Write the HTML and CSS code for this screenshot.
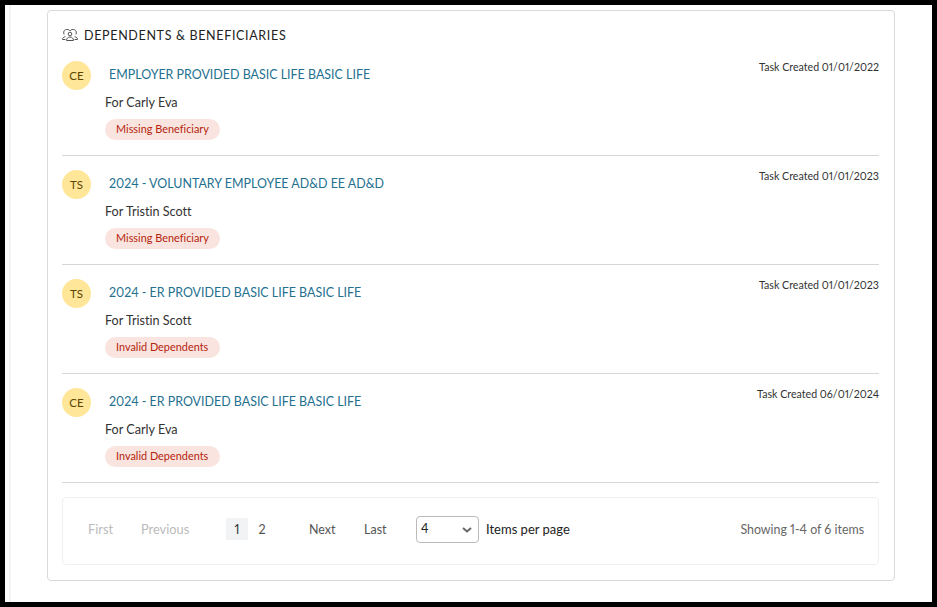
FILE: index.html
```html
<!DOCTYPE html>
<html lang="en">
<head>
<meta charset="utf-8">
<title>Dependents &amp; Beneficiaries</title>
<link rel="stylesheet" href="styles.css">
</head>
<body>
<main class="frame">
  <section class="card">
    <h2 class="card-title">
      <svg class="title-icon" viewBox="0 0 16 12" width="16" height="12" fill="none" stroke="#555" stroke-width="1">
        <path d="M2 5.500C1 1.500 3 .5 5 .5c1.500 0 2.500.5 3 1.500.5-1 1.500-1.500 3-1.500 2 0 4 1 3 5"/>
        <circle cx="8" cy="5" r="1.800"/>
        <path d="M4.500 11.500c0-2 1.500-3.500 3.500-3.500s3.500 1.500 3.500 3.500zM.5 10.500c0-1.500 1-2.500 3-2.800M15.500 10.500c0-1.500-1-2.500-3-2.800M.5 10.500h3M15.500 10.500h-3"/>
      </svg>
      DEPENDENTS &amp; BENEFICIARIES
    </h2>
    <ul class="tasks">
      <li class="task">
        <div class="task-head">
          <span class="avatar">CE</span>
          <a class="task-name">EMPLOYER PROVIDED BASIC LIFE BASIC LIFE</a>
          <span class="task-date">Task Created 01/01/2022</span>
        </div>
        <p class="task-for">For Carly Eva</p>
        <span class="pill">Missing Beneficiary</span>
      </li>
      <li class="task">
        <div class="task-head">
          <span class="avatar">TS</span>
          <a class="task-name">2024 - VOLUNTARY EMPLOYEE AD&amp;D EE AD&amp;D</a>
          <span class="task-date">Task Created 01/01/2023</span>
        </div>
        <p class="task-for">For Tristin Scott</p>
        <span class="pill">Missing Beneficiary</span>
      </li>
      <li class="task">
        <div class="task-head">
          <span class="avatar">TS</span>
          <a class="task-name">2024 - ER PROVIDED BASIC LIFE BASIC LIFE</a>
          <span class="task-date">Task Created 01/01/2023</span>
        </div>
        <p class="task-for">For Tristin Scott</p>
        <span class="pill">Invalid Dependents</span>
      </li>
      <li class="task">
        <div class="task-head">
          <span class="avatar">CE</span>
          <a class="task-name">2024 - ER PROVIDED BASIC LIFE BASIC LIFE</a>
          <span class="task-date">Task Created 06/01/2024</span>
        </div>
        <p class="task-for">For Carly Eva</p>
        <span class="pill">Invalid Dependents</span>
      </li>
    </ul>
    <nav class="pager">
      <span class="pg pg-first muted">First</span>
      <span class="pg pg-prev muted">Previous</span>
      <span class="pg-num current">1</span>
      <span class="pg-num">2</span>
      <span class="pg pg-next">Next</span>
      <span class="pg pg-last">Last</span>
      <span class="size-select">4
        <svg class="chev" viewBox="0 0 10 6" width="10" height="6" fill="none" stroke="#666" stroke-width="2"><path d="M1 1l4 3.500L9 1"/></svg>
      </span>
      <span class="per-page">Items per page</span>
      <span class="showing">Showing 1-4 of 6 items</span>
    </nav>
  </section>
</main>
</body>
</html>
```
FILE: styles.css
```css
* { box-sizing: border-box; }
html, body { margin: 0; height: 100%; background: #000; }
body { font-family: "Lato", "Liberation Sans", sans-serif; color: #333; font-variant-ligatures: none; font-variant-numeric: proportional-nums; }
.frame { width: 927px; height: 597px; margin: 5px 0 0 5px; padding: 5px 0 0 42px; background: linear-gradient(to right, #fff 4px, #f4f4f4 4px, #f4f4f4 6px, #fff 6px); overflow: hidden; }
.card { width: 848px; height: 571px; border: 1px solid #d9d9d9; border-radius: 4px; padding: 0 15px 0 14px; background: #fff; }
.card-title { display: flex; align-items: center; gap: 6px; height: 47px; margin: 0; padding-top: 1px; font-size: 12.500px; font-weight: 400; letter-spacing: .67px; color: #222; }
.title-icon { flex: none; }
.tasks { list-style: none; margin: 0; padding: 0; }
.task { height: 109px; border-bottom: 1px solid #d6d6d6; padding-top: 14px; }
.task:first-child { height: 98px; padding-top: 3px; }
.task-head { display: flex; align-items: center; height: 29px; }
.avatar { flex: none; width: 29px; height: 29px; border-radius: 50%; background: #ffe699; display: flex; align-items: center; justify-content: center; font-size: 11.500px; color: #5b4500; }
.task-name { margin-left: 18px; margin-bottom: 3px; font-size: 12.450px; color: #24708f; }
.task-date { margin-left: auto; align-self: flex-start; margin-top: -1px; font-size: 10.650px; line-height: 14px; }
.task-for { margin: 3px 0 6px 43px; font-size: 12.600px; line-height: 20px; }
.pill { display: block; width: fit-content; min-width: 115px; margin-left: 43px; padding: 0 11px; height: 21px; line-height: 19px; border-radius: 11px; background: #f9e4e0; color: #b5240c; font-size: 10.900px; }
.pager { display: flex; align-items: center; height: 68px; margin-top: 14px; padding: 0 14px 4px 25px; border: 1px solid #f0f0f0; border-radius: 4px; font-size: 12.500px; color: #555; }
.muted { color: #bbb; font-size: 12.800px; }
.pg-first { width: 53px; }
.pg-prev { width: 85px; }
.pg-num { width: 22px; height: 22px; display: flex; align-items: center; justify-content: center; margin-right: 3px; }
.current { background: #f2f3f4; color: #333; }
.pg-next { margin-left: 33px; width: 55px; }
.pg-last { width: 52px; }
.size-select { display: flex; align-items: center; justify-content: space-between; width: 63px; height: 27px; padding: 0 6px 2px 4px; border: 1px solid #bbb; border-radius: 4px; background: #fff; color: #222; font-size: 12.500px; }
.chev { margin-top: 3px; }
.per-page { margin-left: 7px; color: #222; font-size: 13px; }
.showing { margin-left: auto; color: #666; font-size: 12.400px; }
```
